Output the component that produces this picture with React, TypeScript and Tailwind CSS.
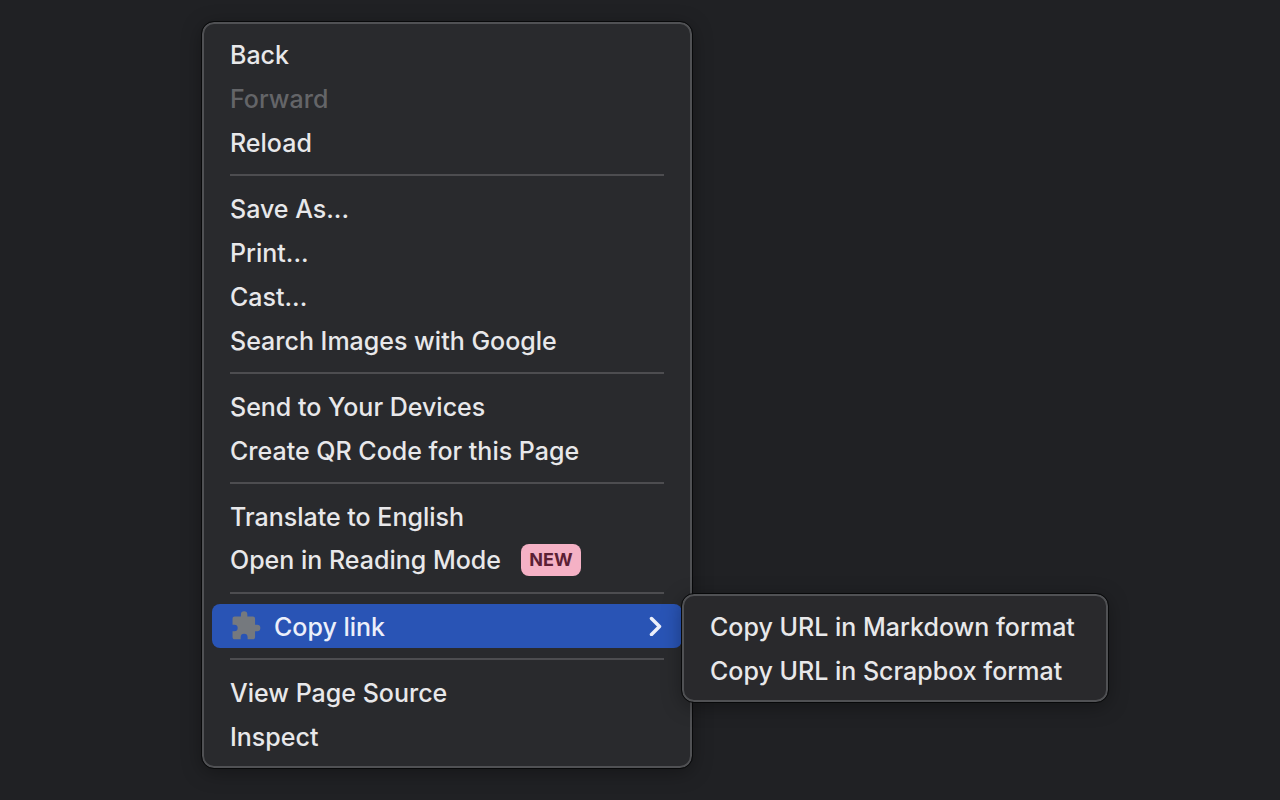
import type { ReactNode } from "react";

function Item({ children, disabled = false }: { children: ReactNode; disabled?: boolean }) {
  return (
    <li role="none">
      <button
        type="button"
        role="menuitem"
        disabled={disabled}
        className="flex h-11 w-full items-center px-[18px] pt-[2px] text-left whitespace-nowrap disabled:text-[#646568]"
      >
        {children}
      </button>
    </li>
  );
}

function Separator() {
  return <li role="separator" className="mx-[18px] my-[10px] h-[2px] bg-[#4d4d50]" />;
}

function PuzzleIcon() {
  return (
    <svg viewBox="0 0 24 24" className="size-8" fill="#75797e" aria-hidden="true">
      <path d="M20.300 11H18.800V6.500c0-.9-.7-1.600-1.600-1.600H13V3.300a2.400 2.400 0 0 0-4.800 0v1.600H3.500c-.9 0-1.600.7-1.600 1.600v4.500H3.300a2.450 2.450 0 0 1 0 4.900H1.900v4.500c0 .9.7 1.600 1.600 1.600H8v-1.500a2.600 2.600 0 0 1 5.200 0V22h4c.9 0 1.600-.7 1.600-1.600v-4.500h1.500a2.450 2.450 0 0 0 0-4.900z" />
    </svg>
  );
}

export default function App() {
  return (
    <main className="min-h-screen bg-[#202124] pt-[22px] pl-[202px] font-['Inter',sans-serif] text-[25px] leading-8 font-medium text-[#e8e8ea]">
      <div className="relative w-fit">
        <ul
          role="menu"
          className="w-[490px] rounded-xl border-2 border-[#505154] bg-[#292a2d] p-2 shadow-[0_4px_20px_rgba(0,0,0,0.35)] outline outline-[#08090a]"
        >
          <Item>Back</Item>
          <Item disabled>Forward</Item>
          <Item>Reload</Item>
          <Separator />
          <Item>Save As...</Item>
          <Item>Print...</Item>
          <Item>Cast...</Item>
          <Item>Search Images with Google</Item>
          <Separator />
          <Item>Send to Your Devices</Item>
          <Item>Create QR Code for this Page</Item>
          <Separator />
          <Item>Translate to English</Item>
          <li role="none">
            <button type="button" role="menuitem" className="flex h-11 w-full items-center px-[18px] whitespace-nowrap">
              <span>Open in Reading Mode</span>
              <span className="ml-5 flex h-8 w-[60px] items-center justify-center rounded-lg bg-[#f5b1c5] text-[18px] font-bold text-[#5c1f35]">
                NEW
              </span>
            </button>
          </li>
          <Separator />
          <li role="none">
            <button
              type="button"
              role="menuitem"
              aria-haspopup="menu"
              aria-expanded="true"
              className="flex h-11 w-full items-center rounded-lg bg-[#2954b5] px-[18px] text-[#eceffa]"
            >
              <PuzzleIcon />
              <span className="ml-3 pt-[2px]">Copy link</span>
              <svg viewBox="0 0 16 20" className="ml-auto h-5 w-4" fill="none" stroke="currentColor" strokeWidth="3.500" strokeLinecap="round" strokeLinejoin="round" aria-hidden="true">
                <path d="M3.500 3l8 8-8 8" transform="translate(0 -.5)" />
              </svg>
            </button>
          </li>
          <Separator />
          <Item>View Page Source</Item>
          <Item>Inspect</Item>
        </ul>
        <ul
          role="menu"
          aria-label="Copy link"
          className="absolute top-[572px] left-[480px] w-[426px] rounded-xl border-2 border-[#505154] bg-[#29292c] p-2 shadow-[0_4px_20px_rgba(0,0,0,0.35)] outline outline-[#08090a]"
        >
          <Item>Copy URL in Markdown format</Item>
          <Item>Copy URL in Scrapbox format</Item>
        </ul>
      </div>
    </main>
  );
}
